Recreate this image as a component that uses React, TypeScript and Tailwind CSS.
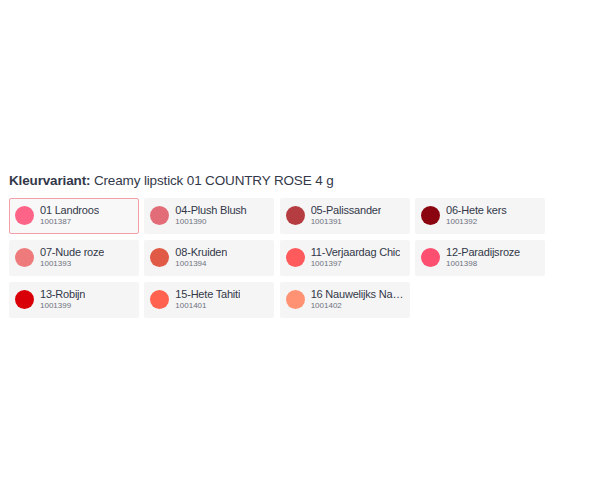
import React from 'react';

type Variant = { name: string; code: string; color: string };

const variants: Variant[] = [
  { name: '01 Landroos', code: '1001387', color: '#fd6488' },
  { name: '04-Plush Blush', code: '1001390', color: '#e26d78' },
  { name: '05-Palissander', code: '1001391', color: '#b53c40' },
  { name: '06-Hete kers', code: '1001392', color: '#8b0510' },
  { name: '07-Nude roze', code: '1001393', color: '#ee7a7c' },
  { name: '08-Kruiden', code: '1001394', color: '#e05a45' },
  { name: '11-Verjaardag Chic', code: '1001397', color: '#ff5a5c' },
  { name: '12-Paradijsroze', code: '1001398', color: '#fd5070' },
  { name: '13-Robijn', code: '1001399', color: '#d90008' },
  { name: '15-Hete Tahiti', code: '1001401', color: '#ff634f' },
  { name: '16 Nauwelijks Naakt', code: '1001402', color: '#ff9272' },
];

export default function App() {
  const selected = 0;
  return (
    <div
      className="w-[600px] h-[503px] bg-white pt-[172px] pl-[9px] text-[#333849]"
      style={{ fontFamily: '"Liberation Sans", Arial, sans-serif' }}
    >
      <h3 className="text-[13.5px] leading-[18px] mb-[8px] tracking-[-0.15px]">
        <span className="font-bold">Kleurvariant:</span> Creamy lipstick 01 COUNTRY ROSE 4 g
      </h3>
      <div className="grid grid-cols-[repeat(4,130px)] gap-x-[5.33px] gap-y-[6px]">
        {variants.map((v, i) => (
          <button
            key={v.code}
            className={`h-[36px] flex items-center gap-[6px] pl-[5px] pr-[4px] text-left rounded-[2px] ${
              i === selected ? 'bg-[#f8f8f8] border border-[#f3a0a8]' : 'bg-[#f5f5f5] border border-transparent'
            }`}
          >
            <span className="w-[19px] h-[19px] rounded-full shrink-0 -mt-[1px]" style={{ backgroundColor: v.color }} />
            <span className="flex flex-col min-w-0 -mt-[2px]">
              <span className="text-[11px] leading-[13px] tracking-[-0.2px] truncate text-[#333849]">{v.name}</span>
              <span className="text-[8px] leading-[10px] text-[#6e7280]">{v.code}</span>
            </span>
          </button>
        ))}
      </div>
    </div>
  );
}
